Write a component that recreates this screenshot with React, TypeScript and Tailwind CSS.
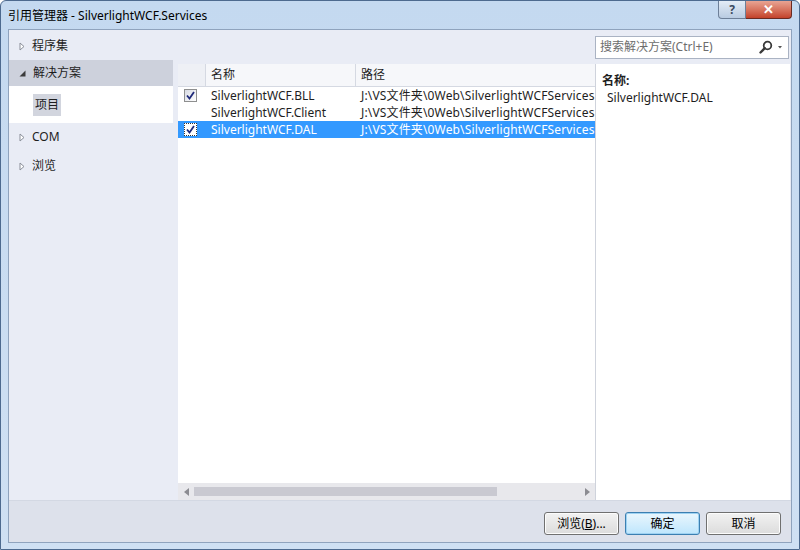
import { useState } from "react";

type Row = { name: string; path: string; checked: boolean };

const rows: Row[] = [
  { name: "SilverlightWCF.BLL", path: "J:\\VS文件夹\\0Web\\SilverlightWCFServices", checked: true },
  { name: "SilverlightWCF.Client", path: "J:\\VS文件夹\\0Web\\SilverlightWCFServices", checked: false },
  { name: "SilverlightWCF.DAL", path: "J:\\VS文件夹\\0Web\\SilverlightWCFServices", checked: true },
];

const font = "font-['Segoe_UI','Noto_Sans','Noto_Sans_CJK_SC',sans-serif]";

function Collapsed() {
  return (
    <svg width="6" height="9" viewBox="0 0 6 9" className="shrink-0">
      <path d="M1 1 L5 4.5 L1 8 Z" fill="#fff" stroke="#8a8f99" strokeWidth="1" />
    </svg>
  );
}

function Expanded() {
  return (
    <svg width="7" height="7" viewBox="0 0 7 7" className="shrink-0">
      <path d="M6.5 0.5 L6.5 6.5 L0.5 6.5 Z" fill="#3c3c3c" />
    </svg>
  );
}

function Check({ selected }: { selected: boolean }) {
  return (
    <div
      className={
        "w-[13px] h-[13px] flex items-center justify-center border " +
        (selected ? "border-dotted border-[#333] bg-white" : "border-[#8e8f8f] bg-gradient-to-br from-[#d8dbe3] to-white")
      }
    >
      <svg width="9" height="9" viewBox="0 0 9 9">
        <path d="M1 4.5 L3.5 7.5 L8 1" fill="none" stroke="#1f2a7a" strokeWidth="1.8" />
      </svg>
    </div>
  );
}

function Btn({ label, primary }: { label: React.ReactNode; primary?: boolean }) {
  return (
    <div
      className={
        "w-[75px] h-[23px] flex items-center justify-center rounded-[3px] border text-[12px] text-black " +
        (primary
          ? "border-[#3c7fb1] bg-gradient-to-b from-[#eaf6fd] to-[#bee6fd] shadow-[inset_0_0_0_1px_#9ed2f2]"
          : "border-[#707070] bg-gradient-to-b from-[#f2f2f2] to-[#dcdcdc] shadow-[inset_0_0_0_1px_#fcfcfc]")
      }
    >
      {label}
    </div>
  );
}

export default function App() {
  const [selected, setSelected] = useState(2);

  return (
    <div className={"w-[800px] h-[550px] flex flex-col bg-gradient-to-b from-[#c4d9f0] to-[#cfe0f3] border border-[#4d6a8f] rounded-t-[6px] overflow-hidden " + font}>
      {/* title bar */}
      <div className="h-[28px] flex items-start shrink-0">
        <div className="pl-[7px] pt-[6px] text-[12px] text-black">引用管理器 - SilverlightWCF.Services</div>
        <div className="ml-auto mr-[7px] flex">
          <div className="w-[28px] h-[18px] flex items-center justify-center border border-[#6d7f98] border-t-0 rounded-bl-[4px] bg-gradient-to-b from-[#e4ecf6] to-[#b9cbe1] text-[12px] font-bold text-[#3b4a5f]">?</div>
          <div className="w-[46px] h-[18px] flex items-center justify-center border border-[#6a2a22] border-t-0 border-l-0 rounded-br-[4px] bg-gradient-to-b from-[#e8a493] to-[#c3412a] text-white text-[13px] font-bold">✕</div>
        </div>
      </div>

      {/* client */}
      <div className="flex-1 mx-[7px] mb-[6px] flex flex-col border border-[#8fa3bd] bg-[#e9ecf5]">
        <div className="flex-1 flex">
          {/* left nav */}
          <div className="w-[164px] pt-[2px] text-[12px] text-[#1e1e1e]">
            <div className="h-[28px] flex items-center gap-[7px] pl-[10px]">
              <Collapsed />
              <span>程序集</span>
            </div>
            <div className="h-[26px] flex items-center gap-[7px] pl-[10px] bg-[#cdd1dc]">
              <Expanded />
              <span>解决方案</span>
            </div>
            <div className="h-[37px] flex items-center pl-[24px] bg-white">
              <span className="px-[2px] py-[2px] bg-[#d2d5de]">项目</span>
            </div>
            <div className="h-[28px] flex items-center gap-[7px] pl-[10px]">
              <Collapsed />
              <span>COM</span>
            </div>
            <div className="h-[30px] flex items-center gap-[7px] pl-[10px]">
              <Collapsed />
              <span>浏览</span>
            </div>
          </div>

          {/* right side */}
          <div className="flex-1 flex flex-col ml-[5px]">
            <div className="h-[34px] flex items-center justify-end pr-[2px]">
              <div className="w-[194px] h-[23px] flex items-center border border-[#aab3c3] bg-white pl-[4px] pr-[4px]">
                <span className="text-[12px] text-[#6d6d6d] flex-1">搜索解决方案(Ctrl+E)</span>
                <svg width="14" height="14" viewBox="0 0 14 14">
                  <circle cx="8.5" cy="5.5" r="3.8" fill="none" stroke="#3a3a3a" strokeWidth="1.8" />
                  <path d="M5.8 8.2 L1.5 12.5" stroke="#3a3a3a" strokeWidth="2.4" strokeLinecap="round" />
                </svg>
                <svg width="8" height="8" viewBox="0 0 8 8" className="ml-[3px]">
                  <path d="M2 3 L6 3 L4 5.5 Z" fill="#555" />
                </svg>
              </div>
            </div>

            <div className="flex-1 flex">
              {/* list */}
              <div className="w-[418px] flex flex-col bg-white border-r border-[#cfd3dc]">
                <div className="h-[23px] flex text-[12px] text-[#1e1e1e] border-b border-[#d5d9e2] bg-[#f6f7fa]">
                  <div className="w-[28px] border-r border-[#d5d9e2] bg-[#eef0f5]" />
                  <div className="w-[150px] flex items-center pl-[5px] border-r border-[#d5d9e2]">名称</div>
                  <div className="flex-1 flex items-center pl-[5px]">路径</div>
                </div>
                <div className="flex-1 flex flex-col">
                  {rows.map((r, i) => {
                    const sel = i === selected;
                    return (
                      <div
                        key={r.name}
                        onClick={() => setSelected(i)}
                        className={"h-[17px] flex items-center text-[12px] whitespace-nowrap " + (sel ? "bg-[#3399ff] text-white" : "text-[#1e1e1e]")}
                      >
                        <div className="w-[28px] shrink-0 flex items-center pl-[6px]">{r.checked && <Check selected={sel} />}</div>
                        <div className="w-[150px] shrink-0 pl-[5px]">{r.name}</div>
                        <div className="flex-1 pl-[5px] tracking-[0.15px]">{r.path}</div>
                      </div>
                    );
                  })}
                </div>
                {/* scrollbar */}
                <div className="h-[17px] flex items-center bg-[#e8e8ec]">
                  <div className="w-[16px] flex justify-center">
                    <svg width="5" height="8" viewBox="0 0 5 8"><path d="M5 0 L0 4 L5 8 Z" fill="#8c8c92" /></svg>
                  </div>
                  <div className="w-[303px] h-[9px] bg-[#c9c9d1]" />
                  <div className="flex-1" />
                  <div className="w-[16px] flex justify-center">
                    <svg width="5" height="8" viewBox="0 0 5 8"><path d="M0 0 L5 4 L0 8 Z" fill="#8c8c92" /></svg>
                  </div>
                </div>
              </div>

              {/* details */}
              <div className="flex-1 flex flex-col bg-white pl-[6px] pt-[8px] text-[12px] text-[#1e1e1e] mr-[1px]">
                <div className="h-[17px] font-bold flex items-center">名称:</div>
                <div className="h-[17px] pl-[5px] flex items-center">{rows[selected].name}</div>
              </div>
            </div>
          </div>
        </div>

        {/* bottom bar */}
        <div className="h-[42px] shrink-0 flex items-start pt-[11px] justify-end gap-[6px] pr-[10px] bg-[#dde1eb] border-t border-[#d3d8e3]">
          <Btn label={<span>浏览(<span className="underline">B</span>)...</span>} />
          <Btn label="确定" primary />
          <Btn label="取消" />
        </div>
      </div>
    </div>
  );
}
